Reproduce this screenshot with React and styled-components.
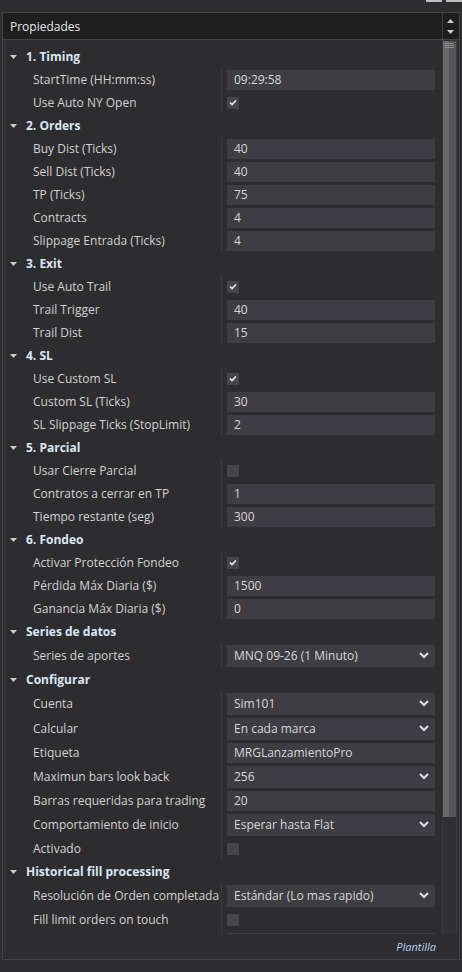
import styled, { createGlobalStyle } from 'styled-components';

const GlobalStyle = createGlobalStyle`
  body {
    margin: 0;
    background: #2d2d30;
    font-family: "Open Sans", "Noto Sans", sans-serif;
  }
`;

const Page = styled.div`
  width: 462px;
  height: 972px;
  background: #2d2d30;
  overflow: hidden;
`;

const TopStrip = styled.div`
  height: 12px;
  display: flex;
  justify-content: flex-end;
  gap: 4px;
`;

const WinButton = styled.div`
  width: 16px;
  height: 2px;
  background: #bdbdbd;
`;

const Frame = styled.div`
  margin: 0 2px;
  height: 946px;
  border: 1px solid #434346;
  display: flex;
  flex-direction: column;
`;

const Header = styled.div`
  height: 26px;
  display: flex;
  background: #1e1e1e;
  border-bottom: 1px solid #434346;
`;

const Title = styled.div`
  flex: 1;
  padding-left: 7px;
  display: flex;
  align-items: center;
  color: #e6e6e6;
  font-size: 12px;
`;

const ArrowBox = styled.div`
  width: 14px;
  margin-right: 2px;
  border-left: 1px solid #3a3a3d;
  display: flex;
  flex-direction: column;
  align-items: center;
  justify-content: center;
  gap: 7px;
`;

const Body = styled.div`
  display: flex;
  height: 894px;
`;

const List = styled.div`
  flex: 1;
  padding-top: 5px;
  overflow: hidden;
`;

const SectionHeader = styled.div`
  height: 23px;
  display: flex;
  align-items: center;
  gap: 9px;
  padding-left: 7px;
  color: #dbe6f7;
  font-size: 12px;
  font-weight: 700;
`;

const GroupBody = styled.div`
  display: grid;
  grid-template-columns: 219px 1fr;
`;

const Label = styled.div`
  height: ${p => p.$h}px;
  padding-left: 30px;
  border-right: 1px solid #3b3b3e;
  display: flex;
  align-items: center;
  color: #d2d2d2;
  font-size: 12px;
  white-space: nowrap;
`;

const Value = styled.div`
  height: ${p => p.$h}px;
  padding-left: 5px;
  display: flex;
  align-items: center;
`;

const TextBox = styled.div`
  width: 201px;
  height: 20px;
  padding-left: 7px;
  background: #3d3d43;
  display: flex;
  align-items: center;
  color: #d8d8d8;
  font-size: 12px;
`;

const SelectBox = styled(TextBox)`
  height: 22px;
  justify-content: space-between;
`;

const Chevron = styled.svg`
  margin-right: 6px;
`;

const CheckBox = styled.div`
  width: 12px;
  height: 12px;
  background: #45454b;
  display: flex;
  align-items: center;
  justify-content: center;
`;

const ScrollBar = styled.div`
  width: 13px;
  margin-right: 2px;
  border-left: 1px solid #3a3a3d;
  border-right: 1px solid #3a3a3d;
  background: #303033;
  display: flex;
  flex-direction: column;
`;

const Thumb = styled.div`
  height: 774px;
  margin-top: 1px;
  background: linear-gradient(90deg, #6a6a6a 0 6px, #555557 6px 100%);
  display: flex;
  flex-direction: column;
  align-items: center;
  gap: 1px;
  padding-top: 2px;
`;

const Grip = styled.div`
  width: 9px;
  height: 1px;
  background: #8a8a8a;
`;

const Footer = styled.div`
  flex: 1;
  display: flex;
  align-items: center;
  justify-content: flex-end;
  padding-right: 23px;
  color: #b9d0f5;
  font-size: 11px;
  font-style: italic;
`;

const Tri = ({ up }) => (
  <svg width="7" height="4" viewBox="0 0 7 4">
    <polygon points={up ? '0,4 7,4 3.5,0' : '0,0 7,0 3.5,4'} fill="#cfcfcf" />
  </svg>
);

const Check = () => (
  <svg width="8" height="7" viewBox="0 0 8 7">
    <polyline points="1,3.5 3,5.5 7,1.5" fill="none" stroke="#e8e8e8" strokeWidth="1.6" />
  </svg>
);

const sections = [
  { title: '1. Timing', rows: [
    ['StartTime (HH:mm:ss)', 'text', '09:29:58'],
    ['Use Auto NY Open', 'check', true],
  ] },
  { title: '2. Orders', rows: [
    ['Buy Dist (Ticks)', 'text', '40'],
    ['Sell Dist (Ticks)', 'text', '40'],
    ['TP (Ticks)', 'text', '75'],
    ['Contracts', 'text', '4'],
    ['Slippage Entrada (Ticks)', 'text', '4'],
  ] },
  { title: '3. Exit', rows: [
    ['Use Auto Trail', 'check', true],
    ['Trail Trigger', 'text', '40'],
    ['Trail Dist', 'text', '15'],
  ] },
  { title: '4. SL', rows: [
    ['Use Custom SL', 'check', true],
    ['Custom SL (Ticks)', 'text', '30'],
    ['SL Slippage Ticks (StopLimit)', 'text', '2'],
  ] },
  { title: '5. Parcial', rows: [
    ['Usar Cierre Parcial', 'check', false],
    ['Contratos a cerrar en TP', 'text', '1'],
    ['Tiempo restante (seg)', 'text', '300'],
  ] },
  { title: '6. Fondeo', rows: [
    ['Activar Protección Fondeo', 'check', true],
    ['Pérdida Máx Diaria ($)', 'text', '1500'],
    ['Ganancia Máx Diaria ($)', 'text', '0'],
  ] },
  { title: 'Series de datos', rows: [
    ['Series de aportes', 'select', 'MNQ 09-26 (1 Minuto)'],
  ] },
  { title: 'Configurar', rows: [
    ['Cuenta', 'select', 'Sim101'],
    ['Calcular', 'select', 'En cada marca'],
    ['Etiqueta', 'text', 'MRGLanzamientoPro'],
    ['Maximun bars look back', 'select', '256'],
    ['Barras requeridas para trading', 'text', '20'],
    ['Comportamiento de inicio', 'select', 'Esperar hasta Flat'],
    ['Activado', 'check', false],
  ] },
  { title: 'Historical fill processing', rows: [
    ['Resolución de Orden completada', 'select', 'Estándar (Lo mas rapido)'],
    ['Fill limit orders on touch', 'check', false],
    ['', 'text', ''],
  ] },
];

const Field = ({ kind, value }) => {
  if (kind === 'check') return <CheckBox>{value && <Check />}</CheckBox>;
  if (kind === 'select') {
    return (
      <SelectBox>
        {value}
        <Chevron width="10" height="7" viewBox="0 0 10 7">
          <polyline points="1,1 5,5 9,1" fill="none" stroke="#e0e0e0" strokeWidth="2" />
        </Chevron>
      </SelectBox>
    );
  }
  return <TextBox>{value}</TextBox>;
};

export default function App() {
  return (
    <Page>
      <GlobalStyle />
      <TopStrip>
        <WinButton />
        <WinButton />
      </TopStrip>
      <Frame>
        <Header>
          <Title>Propiedades</Title>
          <ArrowBox>
            <Tri up />
            <Tri />
          </ArrowBox>
        </Header>
        <Body>
          <List>
            {sections.map(sec => (
              <div key={sec.title}>
                <SectionHeader>
                  <Tri />
                  {sec.title}
                </SectionHeader>
                <GroupBody>
                  {sec.rows.map(([label, kind, value], i) => {
                    const h = kind === 'select' ? 25 : 23;
                    return [
                      <Label key={'l' + i} $h={h}>{label}</Label>,
                      <Value key={'v' + i} $h={h}><Field kind={kind} value={value} /></Value>,
                    ];
                  })}
                </GroupBody>
              </div>
            ))}
          </List>
          <ScrollBar>
            <Thumb>
              <Grip />
              <Grip />
              <Grip />
            </Thumb>
          </ScrollBar>
        </Body>
        <Footer>Plantilla</Footer>
      </Frame>
    </Page>
  );
}
